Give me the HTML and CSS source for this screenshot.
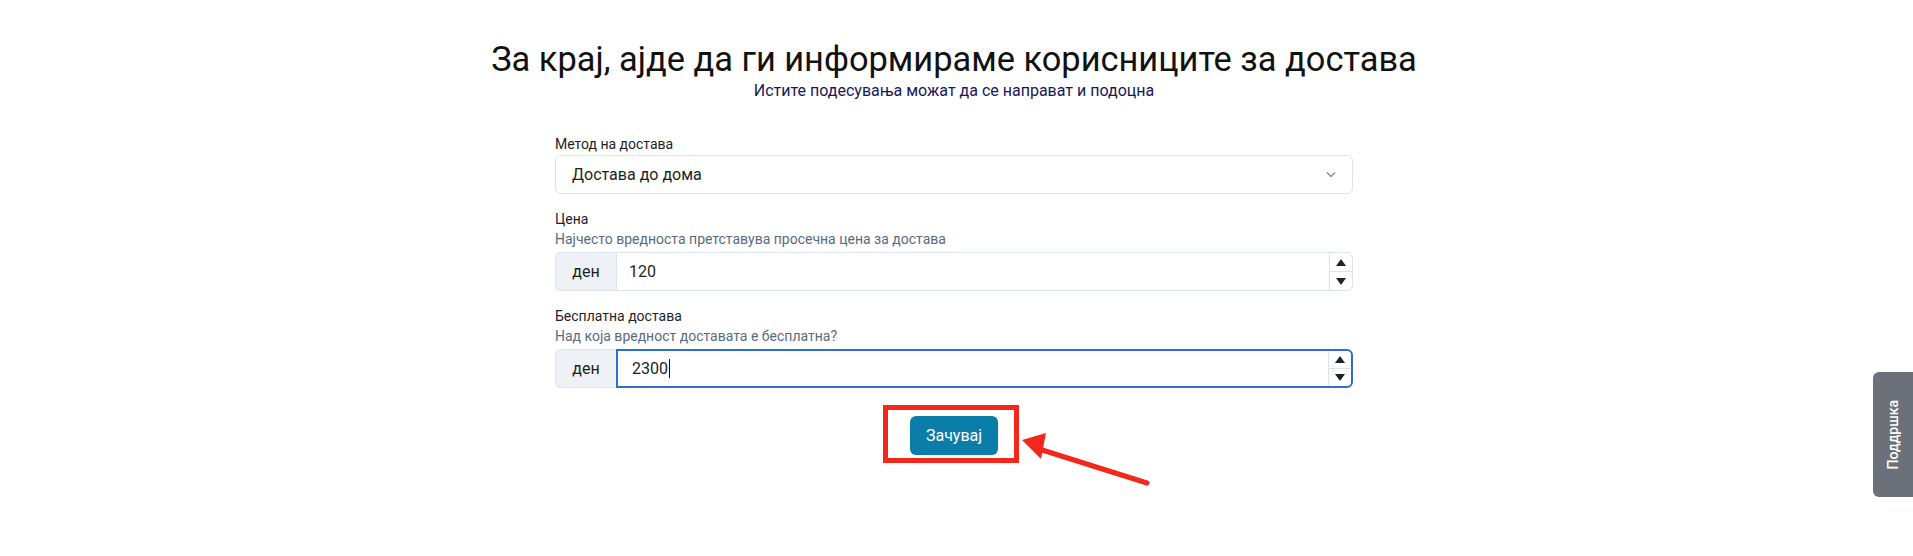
FILE: index.html
```html
<!DOCTYPE html>
<html lang="mk">
<head>
<meta charset="utf-8">
<title>Достава</title>
<link rel="stylesheet" href="styles.css">
</head>
<body>
<main class="page">
  <header class="intro">
    <h1 class="title">За крај, ајде да ги информираме корисниците за достава</h1>
    <p class="subtitle">Истите подесувања можат да се направат и подоцна</p>
  </header>

  <form class="form">
    <div class="field field-first">
      <label class="label">Метод на достава</label>
      <div class="select">
        <span class="select-value">Достава до дома</span>
        <svg class="chevron" width="10" height="7" viewBox="0 0 10 7"><path d="M1 1.5 L5 5.5 L9 1.5" fill="none" stroke="#8a8f98" stroke-width="1.4"/></svg>
      </div>
    </div>

    <div class="field">
      <label class="label">Цена</label>
      <div class="help">Најчесто вредноста претставува просечна цена за достава</div>
      <div class="group">
        <span class="addon">ден</span>
        <div class="box">
          <input class="input" type="text" value="120">
          <div class="spin">
            <span class="spin-btn"><svg width="10" height="7" viewBox="0 0 10 7"><path d="M5 0 L10 7 L0 7Z" fill="#1e222b"/></svg></span>
            <span class="spin-btn"><svg width="10" height="7" viewBox="0 0 10 7"><path d="M0 0 L10 0 L5 7Z" fill="#1e222b"/></svg></span>
          </div>
        </div>
      </div>
    </div>

    <div class="field">
      <label class="label">Бесплатна достава</label>
      <div class="help">Над која вредност доставата е бесплатна?</div>
      <div class="group">
        <span class="addon">ден</span>
        <div class="box box-focus">
          <div class="input input-text">2300<span class="caret"></span></div>
          <div class="spin">
            <span class="spin-btn"><svg width="10" height="7" viewBox="0 0 10 7"><path d="M5 0 L10 7 L0 7Z" fill="#1e222b"/></svg></span>
            <span class="spin-btn"><svg width="10" height="7" viewBox="0 0 10 7"><path d="M0 0 L10 0 L5 7Z" fill="#1e222b"/></svg></span>
          </div>
        </div>
      </div>
    </div>

    <div class="actions">
      <div class="btn-wrap">
        <button type="button" class="btn">Зачувај</button>
        <span class="mark"></span>
        <svg class="arrow" width="140" height="60" viewBox="0 0 140 60">
          <line x1="130" y1="54" x2="22" y2="20" stroke="#f3281c" stroke-width="5" stroke-linecap="round"/>
          <path d="M5 11 L29 4 L24 30 Z" fill="#f3281c"/>
        </svg>
      </div>
    </div>
  </form>
</main>

<div class="support">Поддршка</div>
</body>
</html>
```

FILE: styles.css
```css
* { box-sizing: border-box; }

html, body {
  margin: 0;
  padding: 0;
  background: #ffffff;
}

body {
  font-family: Roboto, "Liberation Sans", sans-serif;
  color: #212529;
  height: 556px;
  overflow: hidden;
}

.page {
  padding: 39px 5px 0 0;
}

.intro {
  text-align: center;
}

.title {
  margin: 0;
  font-size: 34.4px;
  line-height: 40px;
  font-weight: 400;
  color: #111111;
}

.subtitle {
  margin: 2px 0 0;
  font-size: 16px;
  line-height: 20px;
  color: #17175a;
}

.form {
  width: 798px;
  margin: 35px auto 0;
}

.field {
  margin-top: 17px;
}

.field-first {
  margin-top: 0;
}

.label {
  display: block;
  font-size: 14px;
  line-height: 16px;
  color: #1f2329;
  margin-bottom: 3px;
}

.help {
  font-size: 14px;
  line-height: 16px;
  color: #5a6b80;
  margin-top: 4px;
  margin-bottom: 5px;
}

.select {
  height: 39px;
  border: 1px solid #dde3ea;
  border-radius: 6px;
  display: flex;
  align-items: center;
  justify-content: space-between;
  padding: 0 16px 0 16px;
  font-size: 16px;
  color: #1b1f24;
}

.chevron {
  display: block;
}

.group {
  display: flex;
  height: 39px;
}

.addon {
  width: 61px;
  display: flex;
  align-items: center;
  justify-content: center;
  background: #eef2f7;
  border: 1px solid #dde3ea;
  border-right: none;
  border-radius: 6px 0 0 6px;
  font-size: 16px;
  color: #1b1f24;
}

.box {
  flex: 1;
  display: flex;
  border: 1px solid #dde3ea;
  border-radius: 0 6px 6px 0;
  overflow: hidden;
}

.box-focus {
  border: 2px solid #2d70c4;
}

.input {
  flex: 1;
  border: none;
  outline: none;
  padding: 0 12px;
  font-family: inherit;
  font-size: 16px;
  color: #1b1f24;
  background: transparent;
}

.input-text {
  display: flex;
  align-items: center;
  padding-left: 14px;
}

.caret {
  display: inline-block;
  width: 1px;
  height: 19px;
  background: #111;
  margin-left: 1px;
}

.spin {
  width: 23px;
  display: flex;
  flex-direction: column;
  border-left: 1px solid #dde3ea;
}

.spin-btn {
  flex: 1;
  display: flex;
  align-items: center;
  justify-content: center;
}

.spin-btn + .spin-btn {
  border-top: 1px solid #dde3ea;
}

.actions {
  display: flex;
  justify-content: center;
  margin-top: 28px;
}

.btn-wrap {
  position: relative;
}

.btn {
  display: block;
  width: 88px;
  height: 39px;
  border: none;
  border-radius: 6px;
  background: #0a7ea8;
  color: #ffffff;
  font-family: inherit;
  font-size: 16px;
  cursor: pointer;
}

.mark {
  position: absolute;
  left: -27px;
  top: -11px;
  width: 136px;
  height: 58px;
  border: 5px solid #f3281c;
}

.arrow {
  position: absolute;
  left: 107px;
  top: 13px;
}

.support {
  position: absolute;
  right: 0;
  top: 372px;
  width: 40px;
  height: 125px;
  background: #6b7079;
  border-radius: 6px 0 0 6px;
  color: #ffffff;
  font-size: 14px;
  font-weight: 500;
  writing-mode: sideways-lr;
  display: flex;
  align-items: center;
  justify-content: center;
}
```
